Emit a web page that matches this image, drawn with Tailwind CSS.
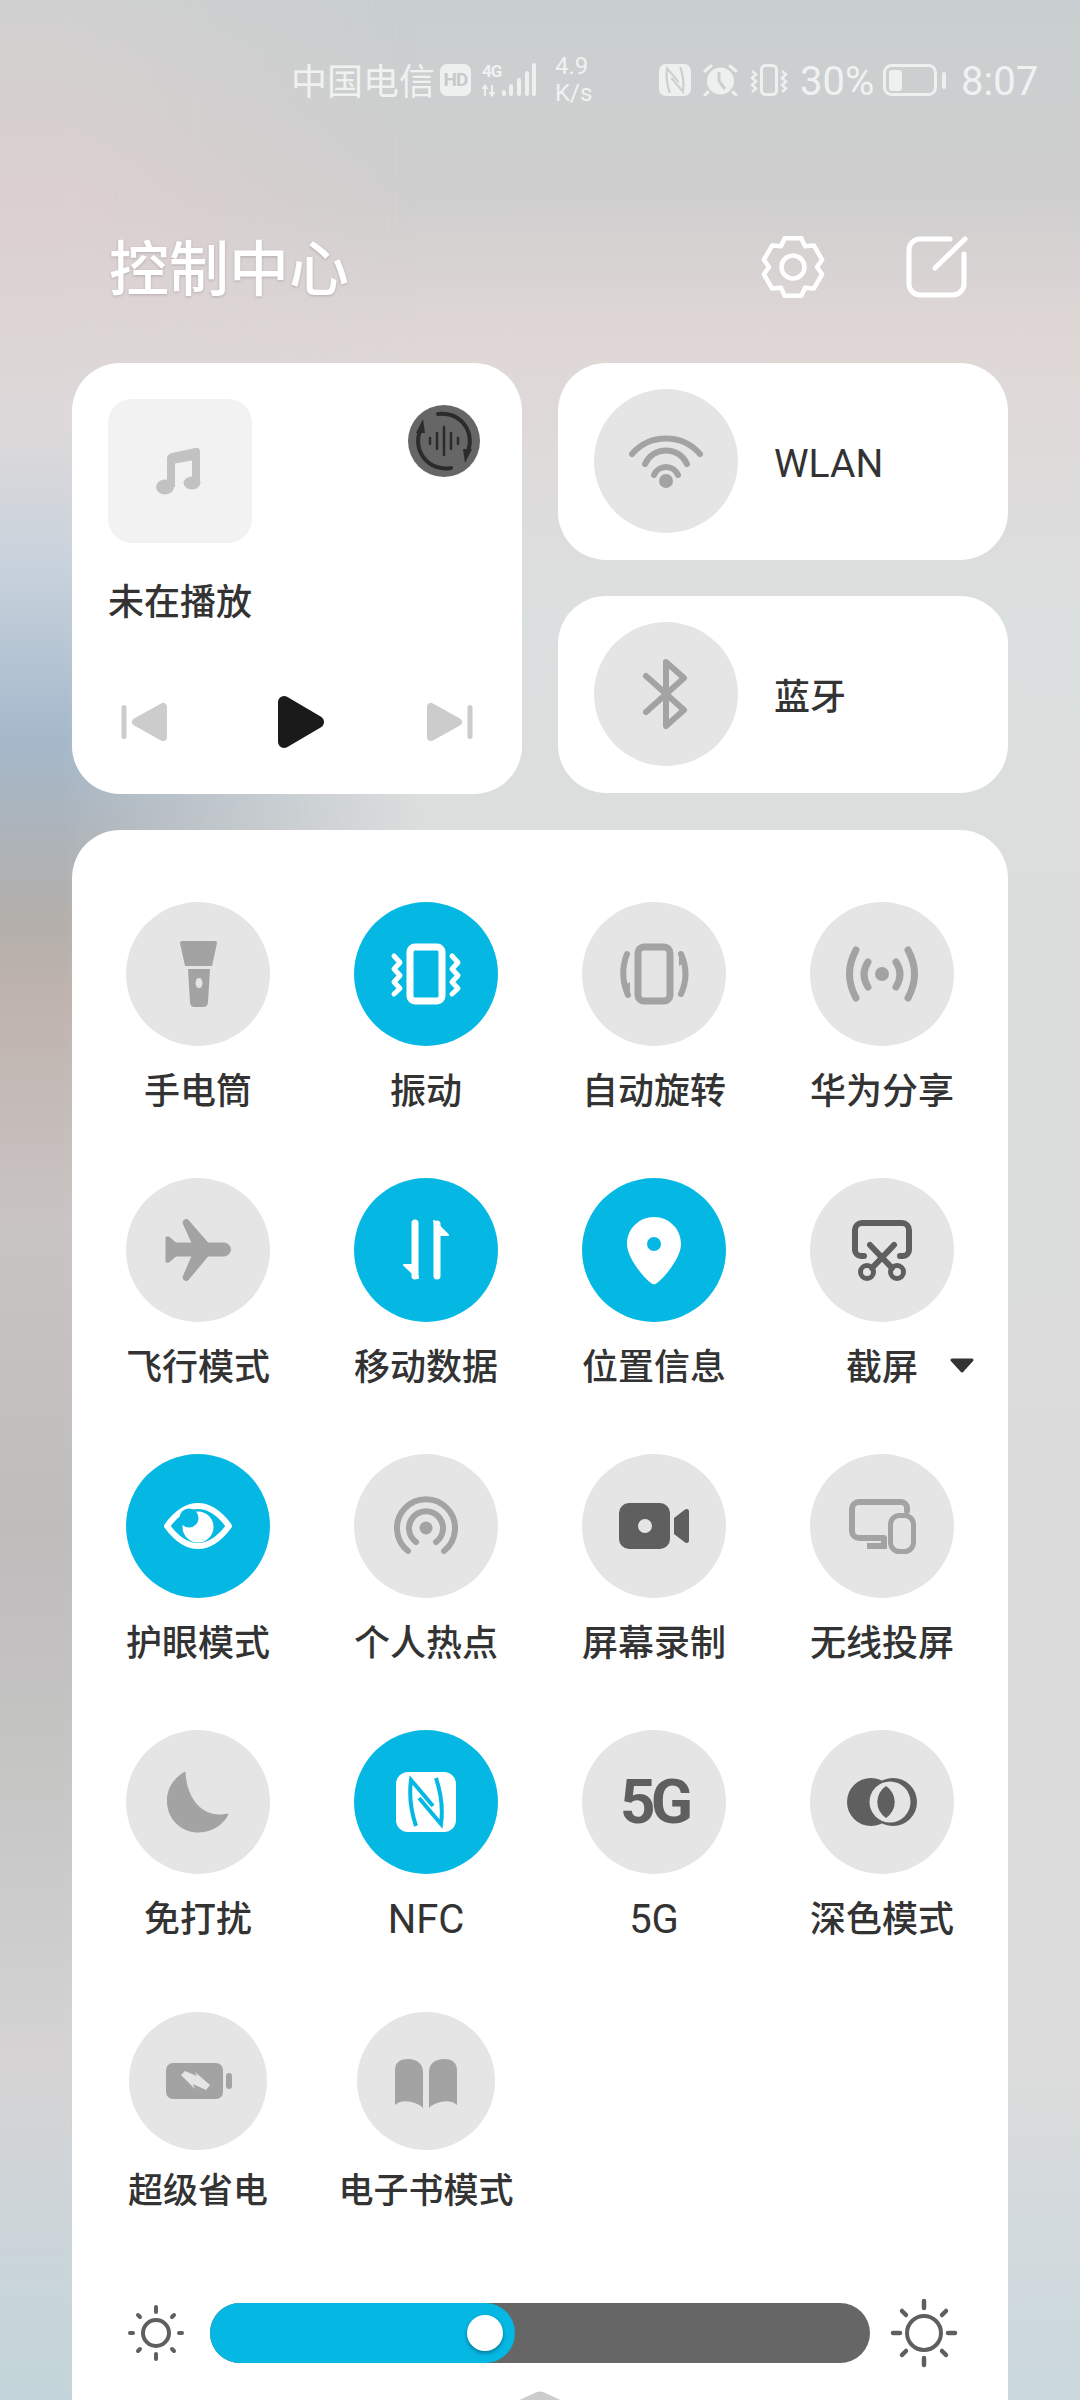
<!DOCTYPE html>
<html lang="zh-CN">
<head>
  <meta charset="UTF-8" />
  <meta name="viewport" content="width=device-width, initial-scale=1.0" />
  <title>控制中心</title>
  <script src="https://cdn.jsdelivr.net/npm/@tailwindcss/browser@4"></script>
</head>
<body class="[font-family:Roboto,'Noto_Sans_CJK_SC',sans-serif]">
  <div class="relative w-[1080px] h-[2400px] overflow-hidden">
    <!-- blurred wallpaper -->
    <div class="absolute inset-0 bg-[linear-gradient(to_bottom,#c9cfd0_0px,#d0cfcf_200px,#dfd7d6_336px,#dcdfdf_612px,#dbdbdb_1530px,#dcdcdc_2065px,#cfd9dd_2295px,#cbd9df_2400px)]"></div>
    <div class="absolute left-0 top-0 w-[420px] h-full bg-[linear-gradient(to_bottom,#d0d0d0_0px,#dccfcf_200px,#ddd9da_430px,#c8d2dc_566px,#a5b9cb_735px,#b3afab_918px,#bfb3ad_995px,#c9c4c4_1224px,#bfbcbc_1530px,#c5c5c4_1760px,#d5d3d4_2065px,#c8d5da_2295px,#c3d5da_2400px)] [mask-image:linear-gradient(to_right,black_15%,transparent)]"></div>

    <div class="relative">
      <!-- status bar -->
      <div class="flex items-center h-[48px] mt-[56px] pl-[291px] text-[#f0f2f2]">
        <span class="w-[144px] mt-[5px] text-[36px] leading-[48px] whitespace-nowrap">中国电信</span>
        <span class="ml-[5px] w-[31px] h-[32px] rounded-[7px] bg-[#eef0f0] text-[#c6caca] text-[19px] font-bold flex items-center justify-center tracking-[-1px]">HD</span>
        <div class="relative ml-[11px] w-[54px] h-[36px]">
          <span class="absolute left-0 -top-[1px] text-[17px] leading-[20px] font-bold tracking-[-1px]">4G</span>
          <svg width="54" height="36" viewBox="0 0 54 36" fill="#eef0f0">
            <path d="M3 34V24M0.500 27L3 23.500L5.500 27M10 23V33M7.500 30L10 33.500L12.500 30" stroke="#eef0f0" stroke-width="2" fill="none"/>
            <rect x="20" y="28" width="4" height="6" rx="2"/>
            <rect x="27" y="22" width="4" height="12" rx="2"/>
            <rect x="35" y="16" width="4" height="18" rx="2"/>
            <rect x="43" y="9" width="4" height="25" rx="2"/>
            <rect x="50" y="1" width="4" height="33" rx="2"/>
          </svg>
        </div>
        <div class="ml-[19px] w-[37px] text-[24px] leading-[27px]">
          <div>4.9</div>
          <div>K/s</div>
        </div>
        <svg class="ml-[67px]" width="32" height="32" viewBox="42 42 60 60">
          <rect x="42" y="42" width="60" height="60" rx="13" fill="#eef0f0"/>
          <path d="M62 96Q54 72 57 50L79 76M82 48Q90 72 87 94L65 68" fill="none" stroke="#cbcfd0" stroke-width="4"/>
        </svg>
        <svg class="ml-[12px]" width="35" height="32" viewBox="0 0 35 32">
          <circle cx="17.500" cy="17" r="13.500" fill="#eef0f0"/>
          <path d="M16 8V17L22 25" stroke="#cbcfd0" stroke-width="3" fill="none"/>
          <path d="M2 7L8 2M33 7L27 2M5 28L2 31M30 28L33 31" stroke="#eef0f0" stroke-width="3" stroke-linecap="round"/>
        </svg>
        <svg class="ml-[12px]" width="40" height="32" viewBox="0 0 40 32" fill="none" stroke="#eef0f0">
          <rect x="11.500" y="1.500" width="15" height="29" rx="4" stroke-width="3"/>
          <path d="M2 7L6 10.500L2 14L6 17.500L2 21L6 24.500L2 28M32 7L36 10.500L32 14L36 17.500L32 21L36 24.500L32 28" stroke-width="2.500"/>
        </svg>
        <span class="ml-[10px] w-[74px] mt-[3px] text-[40px] leading-[48px] whitespace-nowrap">30%</span>
        <svg class="ml-[9px]" width="63" height="32" viewBox="0 0 63 32" fill="#eef0f0">
          <rect x="1.500" y="1.500" width="51" height="29" rx="7" fill="none" stroke="#eef0f0" stroke-width="3"/>
          <rect x="6" y="6" width="13" height="21" rx="3"/>
          <rect x="59" y="8" width="4" height="17" rx="2"/>
        </svg>
        <span class="ml-[15px] mt-[3px] text-[40px] leading-[48px] whitespace-nowrap">8:07</span>
      </div>

      <!-- header -->
      <div class="flex items-center h-[64px] mt-[131px] pl-[109px] pr-[112px]">
        <h1 class="mt-[8px] text-[60px] leading-[64px] font-medium text-white [text-shadow:0_1px_3px_rgba(0,0,0,0.18)]">控制中心</h1>
        <svg class="ml-auto" width="64" height="64" viewBox="-32 -32 64 64" fill="none" stroke="white" stroke-width="4.500" stroke-linejoin="round">
          <path d="M-8.300 -28.800L8.300 -28.800L12 -20.800L20.800 -21.600L29.100 -7.300L24 0L29.100 7.300L20.800 21.600L12 20.800L8.300 28.800L-8.300 28.800L-12 20.800L-20.800 21.600L-29.100 7.300L-24 0L-29.100 -7.300L-20.800 -21.600L-12 -20.800Z"/>
          <circle r="11.500"/>
        </svg>
        <svg class="ml-[81px]" width="62" height="62" viewBox="0 0 62 62" fill="none" stroke="white" stroke-width="5" stroke-linecap="round">
          <path d="M44 3H14A11 11 0 0 0 3 14V48A11 11 0 0 0 14 59H47A11 11 0 0 0 58 48V18"/>
          <path d="M29 32L59 3"/>
        </svg>
      </div>

      <!-- media + connectivity -->
      <div class="grid grid-cols-[450px_450px] gap-x-[36px] px-[72px] mt-[64px]">
        <div class="h-[431px] rounded-[48px] bg-white pt-[36px] px-[36px]">
          <div class="flex items-start justify-between">
            <div class="w-[144px] h-[144px] rounded-[24px] bg-[#f2f2f2]">
              <svg width="144" height="144" viewBox="0 0 144 144" fill="#c2c2c2">
                <path d="M59 60Q59 55 64 54L87 49Q92 48 92 53V60L59 66Z"/>
                <path d="M63 58V88M88 52V84" stroke="#c2c2c2" stroke-width="8"/>
                <ellipse cx="57" cy="88" rx="9" ry="7.500"/>
                <ellipse cx="84" cy="84" rx="8.500" ry="6.500"/>
              </svg>
            </div>
            <svg class="mt-[6px] mr-[6px]" width="72" height="72" viewBox="0 0 72 72" fill="none" stroke="#2b2b2b">
              <circle cx="36" cy="36" r="36" fill="#666666" stroke="none"/>
              <path d="M30 9A27.500 27.500 0 0 1 60 46" stroke-width="4" stroke-linecap="round"/>
              <path d="M43 63A27.500 27.500 0 0 1 12 26" stroke-width="4" stroke-linecap="round"/>
              <path d="M55 44L64 44L57 58Z" fill="#2b2b2b" stroke="none"/>
              <path d="M17 28L8 28L15 14Z" fill="#2b2b2b" stroke="none"/>
              <path d="M22 33V39M29 28V44M36 22V50M43 28V44M50 33V39" stroke-width="2.500" stroke-linecap="round"/>
            </svg>
          </div>
          <div class="mt-[36px] text-[36px] leading-[48px] text-[#333333] font-medium">未在播放</div>
          <div class="flex items-center h-[54px] mt-[68px] pl-[13px]">
            <svg width="46" height="40" viewBox="0 0 46 40" fill="#cccccc" stroke="#cccccc" stroke-linejoin="round">
              <rect x="0.500" y="3" width="5" height="34" rx="2.500" stroke="none"/>
              <path d="M42 5V35L15 20Z" stroke-width="8"/>
            </svg>
            <svg class="ml-[110px]" width="48" height="54" viewBox="0 0 48 54" fill="#1a1a1a" stroke="#1a1a1a" stroke-linejoin="round">
              <path d="M7 7V47L41 27Z" stroke-width="12"/>
            </svg>
            <svg class="ml-[102px]" width="46" height="40" viewBox="0 0 46 40" fill="#cccccc" stroke="#cccccc" stroke-linejoin="round">
              <rect x="40.500" y="3" width="5" height="34" rx="2.500" stroke="none"/>
              <path d="M4 5V35L31 20Z" stroke-width="8"/>
            </svg>
          </div>
        </div>

        <div class="flex flex-col gap-[36px]">
          <div class="h-[197px] rounded-[48px] bg-white flex items-center pl-[36px]">
            <div class="w-[144px] h-[144px] -mt-[2px] rounded-full bg-[#e5e5e5]">
              <svg width="144" height="144" viewBox="0 0 144 144" fill="none" stroke="#a3a3a3" stroke-width="6" stroke-linecap="round">
                <path d="M38 65A45 45 0 0 1 106 65"/>
                <path d="M51 75A23 23 0 0 1 93 75"/>
                <path d="M60 86A13 13 0 0 1 84 86"/>
                <circle cx="72" cy="92" r="7" fill="#a3a3a3" stroke="none"/>
              </svg>
            </div>
            <span class="ml-[36px] mt-[6px] text-[39px] text-[#333333]">WLAN</span>
          </div>
          <div class="h-[197px] rounded-[48px] bg-white flex items-center pl-[36px]">
            <div class="w-[144px] h-[144px] -mt-[2px] rounded-full bg-[#e5e5e5]">
              <svg width="144" height="144" viewBox="0 0 144 144" fill="none" stroke="#a3a3a3" stroke-width="6" stroke-linecap="round" stroke-linejoin="round">
                <path d="M52 54L90 88L72 104V40L90 56L52 90"/>
              </svg>
            </div>
            <span class="ml-[36px] mt-[6px] text-[36px] font-medium text-[#333333]">蓝牙</span>
          </div>
        </div>
      </div>

      <!-- toggles -->
      <div class="mx-[72px] mt-[36px] h-[1600px] rounded-t-[48px] bg-white pt-[72px]">
        <div class="grid grid-cols-4 gap-y-[62px] px-[12px] text-[36px] leading-[48px] text-[#333333] text-center font-medium">

          <div class="flex flex-col items-center">
            <div class="w-[144px] h-[144px] rounded-full bg-[#e5e5e5]">
              <svg width="144" height="144" viewBox="0 0 144 144" fill="#a3a3a3">
                <path d="M54 41Q54 39 56 39H89Q91 39 91 41L86 64H59Z"/>
                <path d="M62 67H84L82 100Q82 105 77 105H69Q64 105 64 100Z"/>
                <ellipse cx="73" cy="81" rx="4" ry="5.500" fill="#e5e5e5" stroke="#a3a3a3" stroke-width="1"/>
              </svg>
            </div>
            <div class="mt-[22px]">手电筒</div>
          </div>
          <div class="flex flex-col items-center">
            <div class="w-[144px] h-[144px] rounded-full bg-[#05b8e4]">
              <svg width="144" height="144" viewBox="0 0 144 144" fill="none" stroke="white" stroke-linejoin="round" stroke-linecap="round">
                <rect x="56" y="45" width="32" height="54" rx="5" stroke-width="7"/>
                <path d="M40 54L46 60.500L40 67L46 73.500L40 80L46 86.500L40 92" stroke-width="5"/>
                <path d="M98 54L104 60.500L98 67L104 73.500L98 80L104 86.500L98 92" stroke-width="5"/>
              </svg>
            </div>
            <div class="mt-[22px]">振动</div>
          </div>
          <div class="flex flex-col items-center">
            <div class="w-[144px] h-[144px] rounded-full bg-[#e5e5e5]">
              <svg width="144" height="144" viewBox="0 0 144 144" fill="none" stroke="#a3a3a3" stroke-linecap="round">
                <rect x="56" y="45" width="32" height="54" rx="6" stroke-width="7"/>
                <path d="M45 52Q37 72 46 93" stroke-width="6"/>
                <path d="M99 52Q108 72 99 92" stroke-width="6"/>
                <path d="M48 80V95L42 84Z" fill="#a3a3a3" stroke="none"/>
                <path d="M97 64V49L103 60Z" fill="#a3a3a3" stroke="none"/>
              </svg>
            </div>
            <div class="mt-[22px]">自动旋转</div>
          </div>
          <div class="flex flex-col items-center">
            <div class="w-[144px] h-[144px] rounded-full bg-[#e5e5e5]">
              <svg width="144" height="144" viewBox="0 0 144 144" fill="none" stroke="#a3a3a3" stroke-width="7" stroke-linecap="round">
                <path d="M46 48Q33 72 46 96M98 48Q111 72 98 96"/>
                <path d="M58 60Q50 72 58 85M86 60Q94 72 86 85"/>
                <circle cx="72" cy="72" r="7" fill="#a3a3a3" stroke="none"/>
              </svg>
            </div>
            <div class="mt-[22px]">华为分享</div>
          </div>

          <div class="flex flex-col items-center">
            <div class="w-[144px] h-[144px] rounded-full bg-[#e5e5e5]">
              <svg width="144" height="144" viewBox="0 0 144 144" fill="#a3a3a3" stroke="#a3a3a3" stroke-width="1" stroke-linejoin="round">
                <path d="M57 45Q58 40 62 42L82 65H98A6.500 6.500 0 0 1 98 78H82L62 102Q58 104 57 99L66 78H50L43 84H40V59H43L50 65H66Z"/>
              </svg>
            </div>
            <div class="mt-[22px]">飞行模式</div>
          </div>
          <div class="flex flex-col items-center">
            <div class="w-[144px] h-[144px] rounded-full bg-[#05b8e4]">
              <svg width="144" height="144" viewBox="0 0 144 144" fill="white" stroke="white" stroke-linecap="round" stroke-linejoin="round">
                <path d="M61 45V98" stroke-width="7"/>
                <path d="M83 46V98" stroke-width="7"/>
                <path d="M64 100L50 87H60Z" stroke-width="2"/>
                <path d="M80 43L94 57H84Z" stroke-width="2"/>
              </svg>
            </div>
            <div class="mt-[22px]">移动数据</div>
          </div>
          <div class="flex flex-col items-center">
            <div class="w-[144px] h-[144px] rounded-full bg-[#05b8e4]">
              <svg width="144" height="144" viewBox="0 0 144 144">
                <path fill="white" fill-rule="evenodd" d="M72 39C57 39 45 51 45 66C45 80 62 100 69 105A4 4 0 0 0 75 105C82 100 99 80 99 66C99 51 87 39 72 39ZM72 59A7 7 0 1 1 72 73A7 7 0 1 1 72 59Z"/>
              </svg>
            </div>
            <div class="mt-[22px]">位置信息</div>
          </div>
          <div class="relative flex flex-col items-center">
            <div class="w-[144px] h-[144px] rounded-full bg-[#e5e5e5]">
              <svg width="144" height="144" viewBox="0 0 144 144" fill="none" stroke="#5f5f5f" stroke-width="6" stroke-linecap="round">
                <path d="M54 78H51A6 6 0 0 1 45 72V52A7 7 0 0 1 52 45H92A7 7 0 0 1 99 52V72A6 6 0 0 1 93 78H90"/>
                <path d="M60 67L82 90M84 67L62 90"/>
                <circle cx="57" cy="94" r="6.500" stroke-width="5"/>
                <circle cx="87" cy="94" r="6.500" stroke-width="5"/>
              </svg>
            </div>
            <div class="mt-[22px]">截屏</div>
            <svg class="absolute left-[182px] top-[180px]" width="24" height="15" viewBox="0 0 24 15" fill="#333333" stroke="#333333" stroke-width="3" stroke-linejoin="round">
              <path d="M2 2H22L12 13Z"/>
            </svg>
          </div>

          <div class="flex flex-col items-center">
            <div class="w-[144px] h-[144px] rounded-full bg-[#05b8e4]">
              <svg width="144" height="144" viewBox="0 0 144 144" fill="none">
                <path d="M41 72C52 57 62 52 72 52C82 52 92 57 103 72C92 87 82 92 72 92C62 92 52 87 41 72Z" stroke="white" stroke-width="6" stroke-linejoin="round"/>
                <circle cx="72" cy="73" r="15.500" fill="white"/>
                <circle cx="63" cy="64" r="9.500" fill="#05b8e4"/>
              </svg>
            </div>
            <div class="mt-[22px]">护眼模式</div>
          </div>
          <div class="flex flex-col items-center">
            <div class="w-[144px] h-[144px] rounded-full bg-[#e5e5e5]">
              <svg width="144" height="144" viewBox="0 0 144 144" fill="none" stroke="#a3a3a3" stroke-width="6" stroke-linecap="round">
                <path d="M54 97A29 29 0 1 1 90 97"/>
                <path d="M62 88A17 17 0 1 1 82 88"/>
                <circle cx="72" cy="74" r="6.500" fill="#a3a3a3" stroke="none"/>
              </svg>
            </div>
            <div class="mt-[22px]">个人热点</div>
          </div>
          <div class="flex flex-col items-center">
            <div class="w-[144px] h-[144px] rounded-full bg-[#e5e5e5]">
              <svg width="144" height="144" viewBox="0 0 144 144" fill="#5f5f5f">
                <path fill-rule="evenodd" d="M47 49H78A10 10 0 0 1 88 59V85A10 10 0 0 1 78 95H47A10 10 0 0 1 37 85V59A10 10 0 0 1 47 49ZM63 65A7 7 0 1 0 63 79A7 7 0 1 0 63 65Z"/>
                <path d="M92 64L103 55.500Q107 54 107 58V86Q107 90 103 88.500L92 80Z"/>
              </svg>
            </div>
            <div class="mt-[22px]">屏幕录制</div>
          </div>
          <div class="flex flex-col items-center">
            <div class="w-[144px] h-[144px] rounded-full bg-[#e5e5e5]">
              <svg width="144" height="144" viewBox="0 0 144 144" fill="none" stroke="#a3a3a3" stroke-width="6" stroke-linecap="round">
                <path d="M97 57V54A6 6 0 0 0 91 48H49A7 7 0 0 0 42 55V77A7 7 0 0 0 49 84H74"/>
                <path d="M57 92H74V84" stroke-linecap="butt"/>
                <rect x="80.500" y="61.500" width="23" height="36" rx="9" stroke-width="5"/>
              </svg>
            </div>
            <div class="mt-[22px]">无线投屏</div>
          </div>

          <div class="flex flex-col items-center">
            <div class="w-[144px] h-[144px] rounded-full bg-[#e5e5e5]">
              <svg width="144" height="144" viewBox="0 0 144 144" fill="#a3a3a3">
                <path d="M59 42C45 50 41 62 41.500 72C42 90 56 102 72 102C86 102 98 94 102 84C78 90 60 70 59 42Z" stroke="#a3a3a3" stroke-width="1" stroke-linejoin="round"/>
              </svg>
            </div>
            <div class="mt-[22px]">免打扰</div>
          </div>
          <div class="flex flex-col items-center">
            <div class="w-[144px] h-[144px] rounded-full bg-[#05b8e4]">
              <svg width="144" height="144" viewBox="0 0 144 144">
                <rect x="42" y="42" width="60" height="60" rx="12" fill="white"/>
                <path d="M62 96Q54 72 57 50L79 76M82 48Q90 72 87 94L65 68" fill="none" stroke="#05b8e4" stroke-width="4"/>
              </svg>
            </div>
            <div class="mt-[22px] text-[40px] font-normal">NFC</div>
          </div>
          <div class="flex flex-col items-center">
            <div class="w-[144px] h-[144px] rounded-full bg-[#e5e5e5] flex items-center justify-center text-[62px] font-bold text-[#5f5f5f] tracking-[-5px]">5G</div>
            <div class="mt-[22px] text-[40px] font-normal">5G</div>
          </div>
          <div class="flex flex-col items-center">
            <div class="w-[144px] h-[144px] rounded-full bg-[#e5e5e5]">
              <svg width="144" height="144" viewBox="0 0 144 144" fill="#5f5f5f">
                <circle cx="83" cy="72" r="24"/>
                <circle cx="61" cy="72" r="24"/>
                <circle cx="80" cy="72" r="20.500" fill="#e5e5e5"/>
                <path d="M76 56A19 19 0 0 1 76 88A19 19 0 0 1 76 56Z"/>
              </svg>
            </div>
            <div class="mt-[22px]">深色模式</div>
          </div>

          <div class="flex flex-col items-center mt-[6px]">
            <div class="w-[138px] h-[138px] rounded-full bg-[#e5e5e5]">
              <svg width="138" height="138" viewBox="0 0 138 138" fill="#a3a3a3">
                <rect x="37" y="51" width="57" height="36" rx="7"/>
                <rect x="97" y="61" width="6" height="16" rx="3"/>
                <path d="M52 63L56 59L68 64L66 60L81 73L77 78L64 72L66 77Z" fill="#e5e5e5"/>
              </svg>
            </div>
            <div class="mt-[18px] text-[35px]">超级省电</div>
          </div>
          <div class="flex flex-col items-center mt-[6px]">
            <div class="w-[138px] h-[138px] rounded-full bg-[#e5e5e5]">
              <svg width="138" height="138" viewBox="0 0 138 138" fill="#a3a3a3">
                <path d="M38 58C38 50 44 47 51 47C60 47 66 52 66 60V96C60 90 46 86 38 93Z"/>
                <path d="M100 58C100 50 94 47 87 47C78 47 72 52 72 60V96C78 90 92 86 100 93Z"/>
              </svg>
            </div>
            <div class="mt-[18px] text-[35px] whitespace-nowrap">电子书模式</div>
          </div>
        </div>

        <!-- brightness -->
        <div class="flex items-center gap-[24px] px-[54px] mt-[82px]">
          <svg width="60" height="60" viewBox="-30 -30 60 60" fill="none" stroke="#5f5f5f" stroke-linecap="round">
            <circle r="13" stroke-width="4"/>
            <path d="M0 -26V-21M0 21V26M-26 0H-23M23 0H26M-18 -18L-16 -16M18 -18L16 -16M-18 18L-16 16M18 18L16 16" stroke-width="4"/>
          </svg>
          <div class="relative w-[660px] h-[60px] rounded-full bg-[#666666]">
            <div class="absolute left-0 top-0 w-[305px] h-full rounded-full bg-[#05b8e4]"></div>
            <div class="absolute left-[257px] top-[12px] w-[36px] h-[36px] rounded-full bg-white shadow-[0_2px_4px_rgba(0,0,0,0.35)]"></div>
          </div>
          <svg width="70" height="70" viewBox="-35 -35 70 70" class="-mx-[5px]" fill="none" stroke="#5f5f5f" stroke-linecap="round">
            <circle r="17" stroke-width="4"/>
            <path d="M0 -32V-25M0 25V32M-31 0H-24M24 0H31M-22 -22L-18 -18M22 -22L18 -18M-22 22L-18 18M22 22L18 18" stroke-width="4.500"/>
          </svg>
        </div>

        <svg class="mx-auto mt-[23px]" width="50" height="24" viewBox="0 0 50 24" fill="#cccccc">
          <path d="M0 11L22 1Q25 0 28 1L50 11V24H0Z"/>
        </svg>
      </div>
    </div>
  </div>
</body>
</html>
